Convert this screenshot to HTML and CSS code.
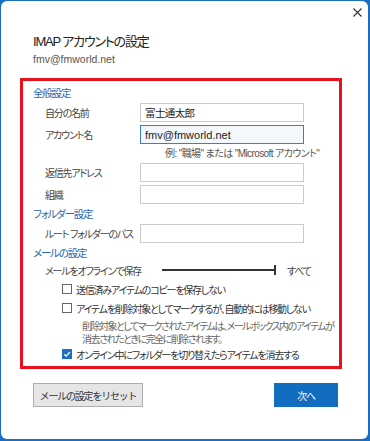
FILE: index.html
```html
<!DOCTYPE html>
<html lang="ja">
  <head>
    <meta charset="UTF-8" />
    <meta name="viewport" content="width=device-width, initial-scale=1.0" />
    <title>IMAP アカウントの設定</title>
    <link rel="stylesheet" href="styles.css">
  </head>
  <body>
    <div class="window">
      <div class="titlebar">
        <svg class="close" width="9" height="9" viewBox="0 0 9 9">
          <path d="M0.5 0.5 L8.5 8.5 M8.5 0.5 L0.5 8.5" stroke="#333" stroke-width="1.1" fill="none" />
        </svg>
      </div>

      <div class="head">
        <h1>IMAP アカウントの設定</h1>
        <p>fmv@fmworld.net</p>
      </div>

      <div class="settings">
        <h3>全般設定</h3>
        <div class="field first">
          <label>自分の名前</label>
          <input class="text jp" value="富士通太郎" />
        </div>
        <div class="field">
          <label>アカウント名</label>
          <input class="text focused" value="fmv@fmworld.net" />
        </div>
        <div class="hint">例: "職場" または "Microsoft アカウント"</div>
        <div class="field tight">
          <label>返信先アドレス</label>
          <input class="text" />
        </div>
        <div class="field">
          <label>組織</label>
          <input class="text" />
        </div>

        <h3>フォルダー設定</h3>
        <div class="field first">
          <label>ルート フォルダーのパス</label>
          <input class="text" />
        </div>

        <h3>メールの設定</h3>
        <div class="slider-row">
          <span class="slider-label">メールをオフラインで保存</span>
          <span class="track"></span>
          <span class="slider-value">すべて</span>
        </div>
        <div class="check-row c1">
          <span class="box"></span>
          <span>送信済みアイテムのコピーを保存しない</span>
        </div>
        <div class="check-row">
          <span class="box"></span>
          <span>アイテムを削除対象としてマークするが、自動的には移動しない</span>
        </div>
        <p class="desc">削除対象としてマークされたアイテムは、メールボックス内のアイテムが<br />消去されたときに完全に削除されます。</p>
        <div class="check-row c3">
          <span class="box checked">
            <svg width="10" height="10" viewBox="0 0 10 10">
              <path d="M2.2 5.2 L4.2 7.1 L7.9 3" stroke="#fff" stroke-width="1.3" fill="none" />
            </svg>
          </span>
          <span>オンライン中にフォルダーを切り替えたらアイテムを消去する</span>
        </div>
      </div>

      <div class="btns">
        <button class="btn reset">メールの設定をリセット</button>
        <button class="btn next">次へ</button>
      </div>
    </div>
  </body>
</html>
```

FILE: styles.css
```css
* {
  margin: 0px;
  padding: 0px;
  box-sizing: border-box;
}
body {
  background-color: #1b6fc2;
  font-family: "Liberation Sans", "Noto Sans CJK JP", sans-serif;
  font-feature-settings: "palt" 1;
  font-size: 10px;
  letter-spacing: -1.2px;
  white-space: nowrap;
  color: #3a3a3a;
}

.window {
  width: 367px;
  height: 438px;
  margin: 1px 2px 2px 1px;
  background-color: #fff;
  border-radius: 6px;
  display: flex;
  flex-direction: column;
}
.titlebar {
  height: 26px;
  display: flex;
  justify-content: flex-end;
  padding: 7px 6px 0px 0px;
}

.head {
  padding-left: 32px;
}
.head h1 {
  margin-top: 6px;
  font-size: 13px;
  font-weight: normal;
  line-height: 18px;
  letter-spacing: -1.2px;
  color: #222;
}
.head p {
  margin-top: 1px;
  font-size: 10.5px;
  line-height: 14px;
  letter-spacing: 0px;
  color: #555;
}

.settings {
  width: 322px;
  height: 291px;
  margin: 12px 0px 0px 19px;
  border: 3px solid #e8121f;
  padding-top: 5px;
}
h3 {
  font-size: 10.5px;
  font-weight: normal;
  line-height: 14px;
  color: #2a66b4;
  padding-left: 10px;
  margin-top: 3px;
}
.settings h3:first-child {
  margin-top: 0px;
}

.field {
  display: flex;
  align-items: center;
  height: 19px;
  padding-left: 22px;
  margin-top: 3px;
}
.field.tight {
  margin-top: 2px;
}
.field label {
  width: 95px;
  color: #444;
}
.text {
  width: 164px;
  height: 19px;
  border: 1px solid #cbcbcb;
  padding: 0px 4px;
  font-family: inherit;
  font-size: 11px;
  letter-spacing: 0px;
  color: #222;
  outline: none;
}
.text.jp {
  font-size: 10.5px;
  letter-spacing: -0.6px;
}
.text.focused {
  border-color: #3b80c6;
  background-color: #f3f8fd;
}
.hint {
  padding-left: 142px;
  line-height: 14px;
  margin-top: 3px;
  letter-spacing: -0.6px;
  color: #555;
}

.slider-row {
  display: flex;
  align-items: center;
  height: 14px;
  padding-left: 22px;
  margin-top: 3px;
}
.slider-label {
  width: 117px;
  color: #444;
}
.track {
  position: relative;
  width: 114px;
  height: 2px;
  background-color: #333;
}
.track::after {
  content: "";
  position: absolute;
  right: 0px;
  top: -4px;
  width: 2px;
  height: 10px;
  background-color: #333;
}
.slider-value {
  margin-left: 11px;
  color: #444;
}

.check-row {
  display: flex;
  align-items: center;
  gap: 4px;
  height: 16px;
  padding-left: 39px;
  margin-top: 3px;
  color: #333;
}
.check-row.c1 {
  margin-top: 4px;
}
.check-row.c3 {
  margin-top: 0px;
}
.box {
  width: 10px;
  height: 10px;
  border: 1px solid #666;
  background-color: #fff;
  display: flex;
  flex-shrink: 0;
}
.box.checked {
  border: none;
  background-color: #1a6cc4;
}
.desc {
  padding-left: 59px;
  margin-top: 4px;
  line-height: 13px;
  letter-spacing: -1.5px;
  color: #666;
}

.btns {
  display: flex;
  justify-content: space-between;
  padding: 0px 30px 0px 32px;
  margin-top: 14px;
}
.btn {
  height: 24px;
  font-family: inherit;
  font-size: 10px;
  letter-spacing: -1.2px;
}
.reset {
  width: 110px;
  background-color: #e5e5e5;
  border: 1px solid #adadad;
  color: #333;
}
.next {
  width: 64px;
  background-color: #126cc0;
  border: 1px solid #126cc0;
  color: #fff;
}
```
